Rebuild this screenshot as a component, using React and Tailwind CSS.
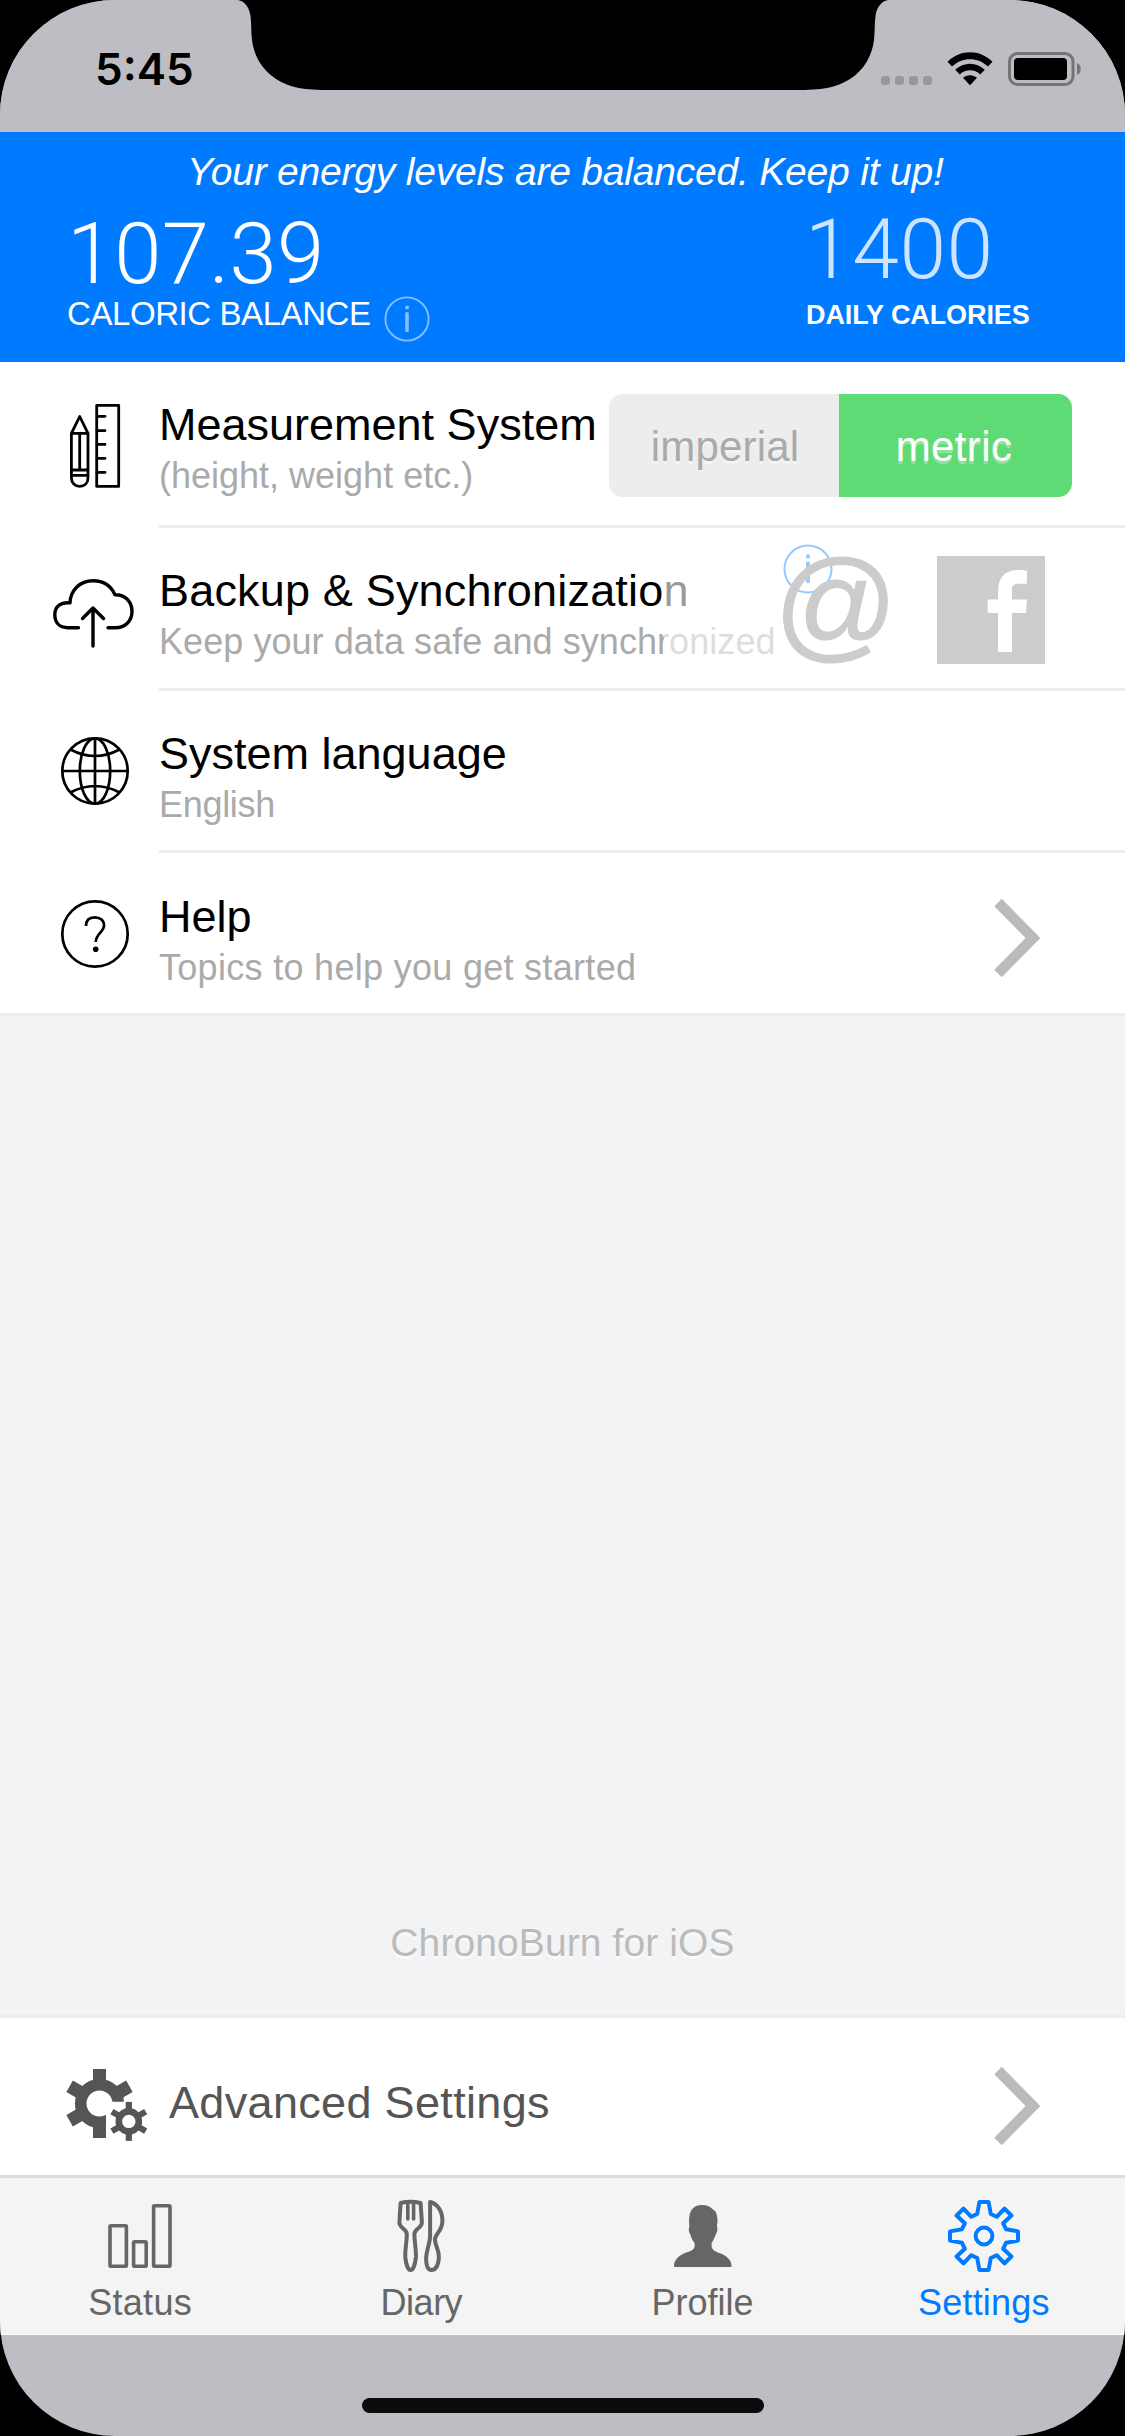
import React from "react";

const SANS = "font-['Liberation_Sans',Arial,sans-serif]";

function StatusBar() {
  return (
    <div className="relative flex h-[132px] shrink-0 items-start justify-between bg-[#bebdc3]">
      <svg className="absolute left-0 top-0" width="1125" height="92" viewBox="0 0 1125 92">
        <path
          d="M238 0C245 1 249.500 8 250.500 16C251.500 24 251 30 252 40C254 56 262 70 276 79C290 88 305 90 330 90H796C821 90 836 88 850 79C864 70 872 56 874 40C875 30 874.500 24 875.500 16C876.500 8 881 1 888 0Z"
          fill="#000"
        />
      </svg>
      <div className="pl-[95px] pt-[42px] font-['Inter',sans-serif] text-[44px] leading-[54px] font-semibold text-black">
        5:45
      </div>
      <div className="flex pr-[43px] pt-[52px]">
        <div className="mt-[24px] flex gap-[5px]">
          <i className="h-[9px] w-[9px] rounded-[3px] bg-[#98979c]" />
          <i className="h-[9px] w-[9px] rounded-[3px] bg-[#98979c]" />
          <i className="h-[9px] w-[9px] rounded-[3px] bg-[#98979c]" />
          <i className="h-[9px] w-[9px] rounded-[3px] bg-[#98979c]" />
        </div>
        <svg className="ml-[15px]" width="46" height="34" viewBox="0 0 46 34">
          <path d="M0.500 9.800C13 -3 33 -3 45.500 9.800L41 14.600C31 4.800 15 4.800 5 14.600Z" />
          <path d="M8.200 17.800C16.500 9.600 29.500 9.600 37.800 17.800L33.200 22.400C27.500 17 18.500 17 12.800 22.400Z" />
          <path d="M16 25.800C20 22.400 26 22.400 30 25.800L23 33.200Z" />
        </svg>
        <svg className="ml-[15px]" width="74" height="34" viewBox="0 0 74 34">
          <rect x="1.500" y="1.500" width="63.500" height="31" rx="8" fill="none" stroke="#757478" strokeWidth="3" />
          <rect x="6" y="6" width="53" height="22" rx="4" />
          <path d="M69 11C74 12.500 74 21.500 69 23Z" fill="#757478" />
        </svg>
      </div>
    </div>
  );
}

function InfoIcon({ size, className }) {
  return (
    <svg className={className} width={size} height={size} viewBox="0 0 46 46" fill="currentColor">
      <circle cx="23" cy="23" r="21.600" fill="none" stroke="currentColor" strokeWidth="1.900" />
      <circle cx="23" cy="11.500" r="2" />
      <rect x="21.200" y="16" width="3.600" height="20" rx="1.500" />
    </svg>
  );
}

function Header() {
  return (
    <header className="h-[230px] shrink-0 bg-[#007aff] pt-[16px] text-white">
      <p className="whitespace-nowrap pl-[187px] text-[39px] leading-[48px] tracking-[-0.2px] italic">
        Your energy levels are balanced. Keep it up!
      </p>
      <div className="flex justify-between pl-[67px] pr-[96px]">
        <div className="pt-[18px]">
          <div className="font-['Roboto',sans-serif] text-[85px] leading-[80px] font-light tracking-[0.2px]">107.39</div>
          <div className="flex h-[40px] text-[33px] leading-[40px]">
            <span className="w-[317px] whitespace-nowrap tracking-[-0.42px]">CALORIC BALANCE</span>
            <InfoIcon size={46} className="mt-[2px] text-[#85bfff]" />
          </div>
        </div>
        <div className="w-[223px] pt-[14px]">
          <div className="ml-[-1px] font-['Roboto',sans-serif] text-[84px] leading-[80px] font-light tracking-[0.6px] text-[#cce4ff]">1400</div>
          <div className="mt-[5px] whitespace-nowrap text-[27px] leading-[40px] font-bold tracking-[-0.1px]">DAILY CALORIES</div>
        </div>
      </div>
    </header>
  );
}

function Labels({ title, sub, titleClass, subClass }) {
  return (
    <div className="whitespace-nowrap pt-[34px]">
      <div className={`text-[45px] leading-[58px] text-black ${titleClass || ""}`}>{title}</div>
      <div className={`text-[36px] leading-[44px] text-[#aaaaaa] ${subClass || ""}`}>{sub}</div>
    </div>
  );
}

function Chevron({ className }) {
  return (
    <svg className={className} width="48" height="80" viewBox="0 0 48 80">
      <path d="M5 4.500L40 40L5 75.500" fill="none" stroke="#bbbbbb" strokeWidth="10.500" />
    </svg>
  );
}

function Row({ icon, children, height, last }) {
  return (
    <div className={`flex ${height}`}>
      <div className="w-[159px] shrink-0">{icon}</div>
      <div className={last ? "relative flex flex-1 justify-between" : "relative flex flex-1 justify-between border-b-[3px] border-[#ededed]"}>
        {children}
      </div>
    </div>
  );
}

const MeasureIcon = (
  <svg width="159" height="163" viewBox="0 362 159 163" fill="none" stroke="#000" strokeWidth="2.800" strokeLinejoin="round" strokeLinecap="round">
    <rect x="96.700" y="405.400" width="22" height="81" />
    <path d="M97 416.300H105M97 430.600H105M97 444.400H105M97 458.400H105M97 472.400H105" />
    <path d="M71.400 433.400L79.700 416.500L88 433.400V477.500C88 483 84.500 486.400 79.700 486.400C75 486.400 71.400 483 71.400 477.500ZM71.400 433.400H88M79.700 433.400V470M71.400 470H88M71.400 475.400H88" />
  </svg>
);

const CloudIcon = (
  <svg width="159" height="160" viewBox="0 528 159 160" fill="none" stroke="#000" strokeWidth="3.400" strokeLinecap="round" strokeLinejoin="round">
    <path d="M78.500 627.700H68C59 627.700 54.800 622 54.800 614.500C54.800 606.500 60.500 602 70 602.800C70.500 590 80 580.800 93 580.800C103 580.800 111 586 115 594.700C125 594.500 132 601.500 132 611.500C132 621 125 627.700 115.500 627.700H108" />
    <path d="M93 646V608M82.500 618.500L93 608L103.500 618.500" />
  </svg>
);

const GlobeIcon = (
  <svg width="159" height="159" viewBox="0 691 159 159" fill="none" stroke="#000" strokeWidth="2.700">
    <circle cx="95" cy="771" r="32.700" />
    <ellipse cx="95" cy="771" rx="15.200" ry="32.700" />
    <path d="M95 738V804M62 771H128M70.500 749.500Q95 762.500 119.500 749.500M70.500 792.500Q95 779.500 119.500 792.500" />
  </svg>
);

const HelpIcon = (
  <svg width="159" height="160" viewBox="0 853 159 160" fill="none" stroke="#000" strokeWidth="2.700">
    <circle cx="95" cy="934" r="32.700" />
    <path d="M86 926C86 920 89.500 917.300 94.700 917.300C100.500 917.300 104 920.500 104 925.500C104 932 96 933.500 95.700 942" />
    <circle cx="95.700" cy="949.300" r="2.800" fill="#000" stroke="none" />
  </svg>
);

function FacebookIcon() {
  return (
    <svg className="absolute left-[778px] top-[28px]" width="108" height="108" viewBox="937 556 108 108">
      <rect x="937" y="556" width="108" height="108" fill="#cccccc" />
      <path
        d="M998 652V613H987.700V599.500H998V593C998 577.500 1004.500 570 1018 570C1021.500 570 1024.500 570.300 1027 570.800L1026.800 583.700H1018.500C1013.500 583.700 1012 585.500 1012 590V599.500H1027L1026 613H1012V652Z"
        fill="#fff"
      />
    </svg>
  );
}

const TEETH = [0, 60, 120, 180, 240, 300];

function Gears() {
  return (
    <svg className="shrink-0" width="169" height="157" viewBox="0 2018 169 157">
      <defs>
        <clipPath id="notch">
          <path d="M50 2060H150V2101.700H106V2150H50Z" />
        </clipPath>
      </defs>
      <g clipPath="url(#notch)" fill="#555555">
        <circle cx="99.500" cy="2103.500" r="18.800" fill="none" stroke="#555555" strokeWidth="11.600" />
        {TEETH.map((a) => (
          <rect key={a} x="93" y="2069" width="13" height="17" transform={`rotate(${a} 99.500 2103.500)`} />
        ))}
      </g>
      <g fill="#555555">
        <circle cx="128.800" cy="2121.400" r="10" fill="none" stroke="#555555" strokeWidth="6.600" />
        {TEETH.map((a) => (
          <rect key={a} x="125.700" y="2101.900" width="6.200" height="9" transform={`rotate(${a} 128.800 2121.400)`} />
        ))}
      </g>
    </svg>
  );
}

/* Outline of one quarter of the eight-toothed wheel, repeated by rotation. */
const QUARTER = [[-6.800, -22], [-4.600, -34], [4.600, -34], [6.800, -22], [12.700, -19.200], [20.500, -27.400], [27.400, -20.500], [19.200, -12.700]];
const WHEEL = [0, 1, 2, 3]
  .flatMap((q) =>
    QUARTER.map(([x, y]) => {
      let p = [x, y];
      for (let i = 0; i < q; i++) p = [-p[1], p[0]];
      return p.join(",");
    })
  )
  .join(" ");

const TABS = [
  {
    label: "Status",
    className: "text-[#666666] tracking-[0.3px]",
    icon: (
      <svg width="80" height="74" viewBox="101.200 2199 80 74" fill="none" stroke="currentColor" strokeWidth="3.600">
        <rect x="110.200" y="2225.700" width="16.400" height="40.600" rx="1" />
        <rect x="133.800" y="2241.700" width="12.600" height="24.600" rx="1" />
        <rect x="153.800" y="2205.700" width="16.400" height="60.600" rx="1" />
      </svg>
    ),
  },
  {
    label: "Diary",
    className: "text-[#666666] tracking-[-0.5px]",
    icon: (
      <svg width="80" height="74" viewBox="381.900 2199 80 74" fill="none" stroke="currentColor" strokeWidth="4" strokeLinejoin="round" strokeLinecap="round">
        <path d="M400.500 2203C406 2201.500 415 2201.500 420.500 2203L421.800 2222.500C421.800 2228 414.300 2229 414.300 2234C414.300 2243 416.300 2250 415.800 2257C415 2265 413 2270 410.500 2270C408 2270 406 2265 405.200 2257C404.700 2250 406.700 2243 406.700 2234C406.700 2229 399.300 2228 399.300 2222.500Z" />
        <path d="M407.700 2203V2219M413.500 2203V2219" strokeWidth="3.600" />
        <path d="M430 2202C438 2204 442.500 2212 442.300 2221C442.300 2231 435 2234 434.800 2239.500C435 2246 439.300 2250 438.800 2258C438 2266 435 2270 431.500 2270C428 2270 426 2266 426 2258C426.500 2249 430 2243 430 2236Z" />
      </svg>
    ),
  },
  {
    label: "Profile",
    className: "text-[#666666]",
    icon: (
      <svg width="80" height="74" viewBox="663.100 2199 80 74" fill="currentColor">
        <path d="M702.300 2205C707 2205 711 2207 713 2209.500C716 2210 717.300 2215 717.700 2221L717 2226C718 2228.500 717.500 2232.500 716 2234C714.500 2238.500 713 2241 711.700 2243V2247C713 2251 717 2252 721 2253.500C728 2256.500 731.700 2261 731.700 2266Q731.700 2267 730.500 2267H675.500Q674 2267 674 2266C674 2261 678 2256 685 2253C689 2251.500 693 2251 694.700 2247V2243C692.500 2240.500 691 2237 690.500 2234.500C688.700 2232 688.500 2229 689.500 2226.500C688 2212 692 2205 702.300 2205Z" />
      </svg>
    ),
  },
  {
    label: "Settings",
    className: "text-[#007aff] tracking-[0.2px]",
    icon: (
      <svg width="80" height="74" viewBox="-40 -37 80 74" fill="none" stroke="currentColor" strokeWidth="4" strokeLinejoin="round">
        <polygon points={WHEEL} />
        <circle r="8.400" />
      </svg>
    ),
  },
];

export default function App() {
  return (
    <div className="w-[1125px] bg-black">
      <div className={`flex h-[2436px] flex-col overflow-hidden rounded-[115px] bg-[#bebdc3] ${SANS}`}>
        <StatusBar />
        <Header />

        <section className="h-[654px] shrink-0 border-b-[3px] border-[#ededed] bg-white">
          <Row icon={MeasureIcon} height="h-[166px]">
            <Labels title="Measurement System" sub="(height, weight etc.)" />
            <div className="mt-[32px] mr-[53px] flex h-[103px] w-[463px] overflow-hidden rounded-[14px] text-[42px] leading-[106px]">
              <div className="w-[230px] bg-[#ededed] pl-[2px] text-center tracking-[0.2px] text-[#aaaaaa] [text-shadow:0_3px_1px_rgba(255,255,255,0.4)]">imperial</div>
              <div className="flex-1 bg-[#5fdb76] pr-[3px] text-center tracking-[0.4px] text-white [text-shadow:0_3px_1px_rgba(255,255,255,0.3)]">metric</div>
            </div>
          </Row>
          <Row icon={CloudIcon} height="h-[163px]">
            <Labels title="Backup &amp; Synchronization" titleClass="tracking-[0.18px]" sub="Keep your data safe and synchronized" subClass="tracking-[0.06px]" />
            <div className="absolute left-[505px] top-[10px] h-[145px] w-[461px] bg-white/60" />
            <InfoIcon size={50} className="absolute left-[624px] top-[16px] text-[#99caff]" />
            <div className="absolute left-[612px] top-[12px] w-[130px] text-center text-[122px] leading-[128px] text-[#cccccc] [-webkit-text-stroke:1px_#cccccc]">@</div>
            <FacebookIcon />
          </Row>
          <Row icon={GlobeIcon} height="h-[162px]">
            <Labels title="System language" sub="English" subClass="tracking-[-0.3px]" />
          </Row>
          <Row icon={HelpIcon} height="h-[160px]" last>
            <div className="pt-px">
              <Labels title="Help" sub="Topics to help you get started" subClass="tracking-[0.3px]" />
            </div>
            <Chevron className="mt-[45px] mr-[84px]" />
          </Row>
        </section>

        <section className="flex flex-1 items-end justify-center bg-[#f2f3f5] pb-[48px]">
          <span className="text-[39px] leading-[48px] tracking-[0.1px] text-[#bbbbbb] [text-shadow:0_3px_1px_rgba(255,255,255,0.6)]">ChronoBurn for iOS</span>
        </section>

        <section className="flex h-[160px] shrink-0 items-center border-t-[3px] border-[#ededed] bg-white">
          <Gears />
          <span className="flex-1 pt-[13px] text-[45px] leading-[58px] tracking-[0.33px] text-[#555555]">Advanced Settings</span>
          <Chevron className="mt-[18px] mr-[84px]" />
        </section>

        <nav className="grid h-[160px] shrink-0 grid-cols-4 border-t-[3px] border-b border-t-[#dddddd] border-b-white bg-[#f4f4f4]">
          {TABS.map((t) => (
            <div key={t.label} className={`flex flex-col items-center pt-[21px] ${t.className}`}>
              {t.icon}
              <span className="mt-[10px] pr-[1px] text-[36px] leading-[40px]">{t.label}</span>
            </div>
          ))}
        </nav>

        <footer className="flex h-[101px] shrink-0 justify-center pt-[63px]">
          <div className="h-[15px] w-[402px] rounded-full bg-[#0b0b0b]" />
        </footer>
      </div>
    </div>
  );
}
